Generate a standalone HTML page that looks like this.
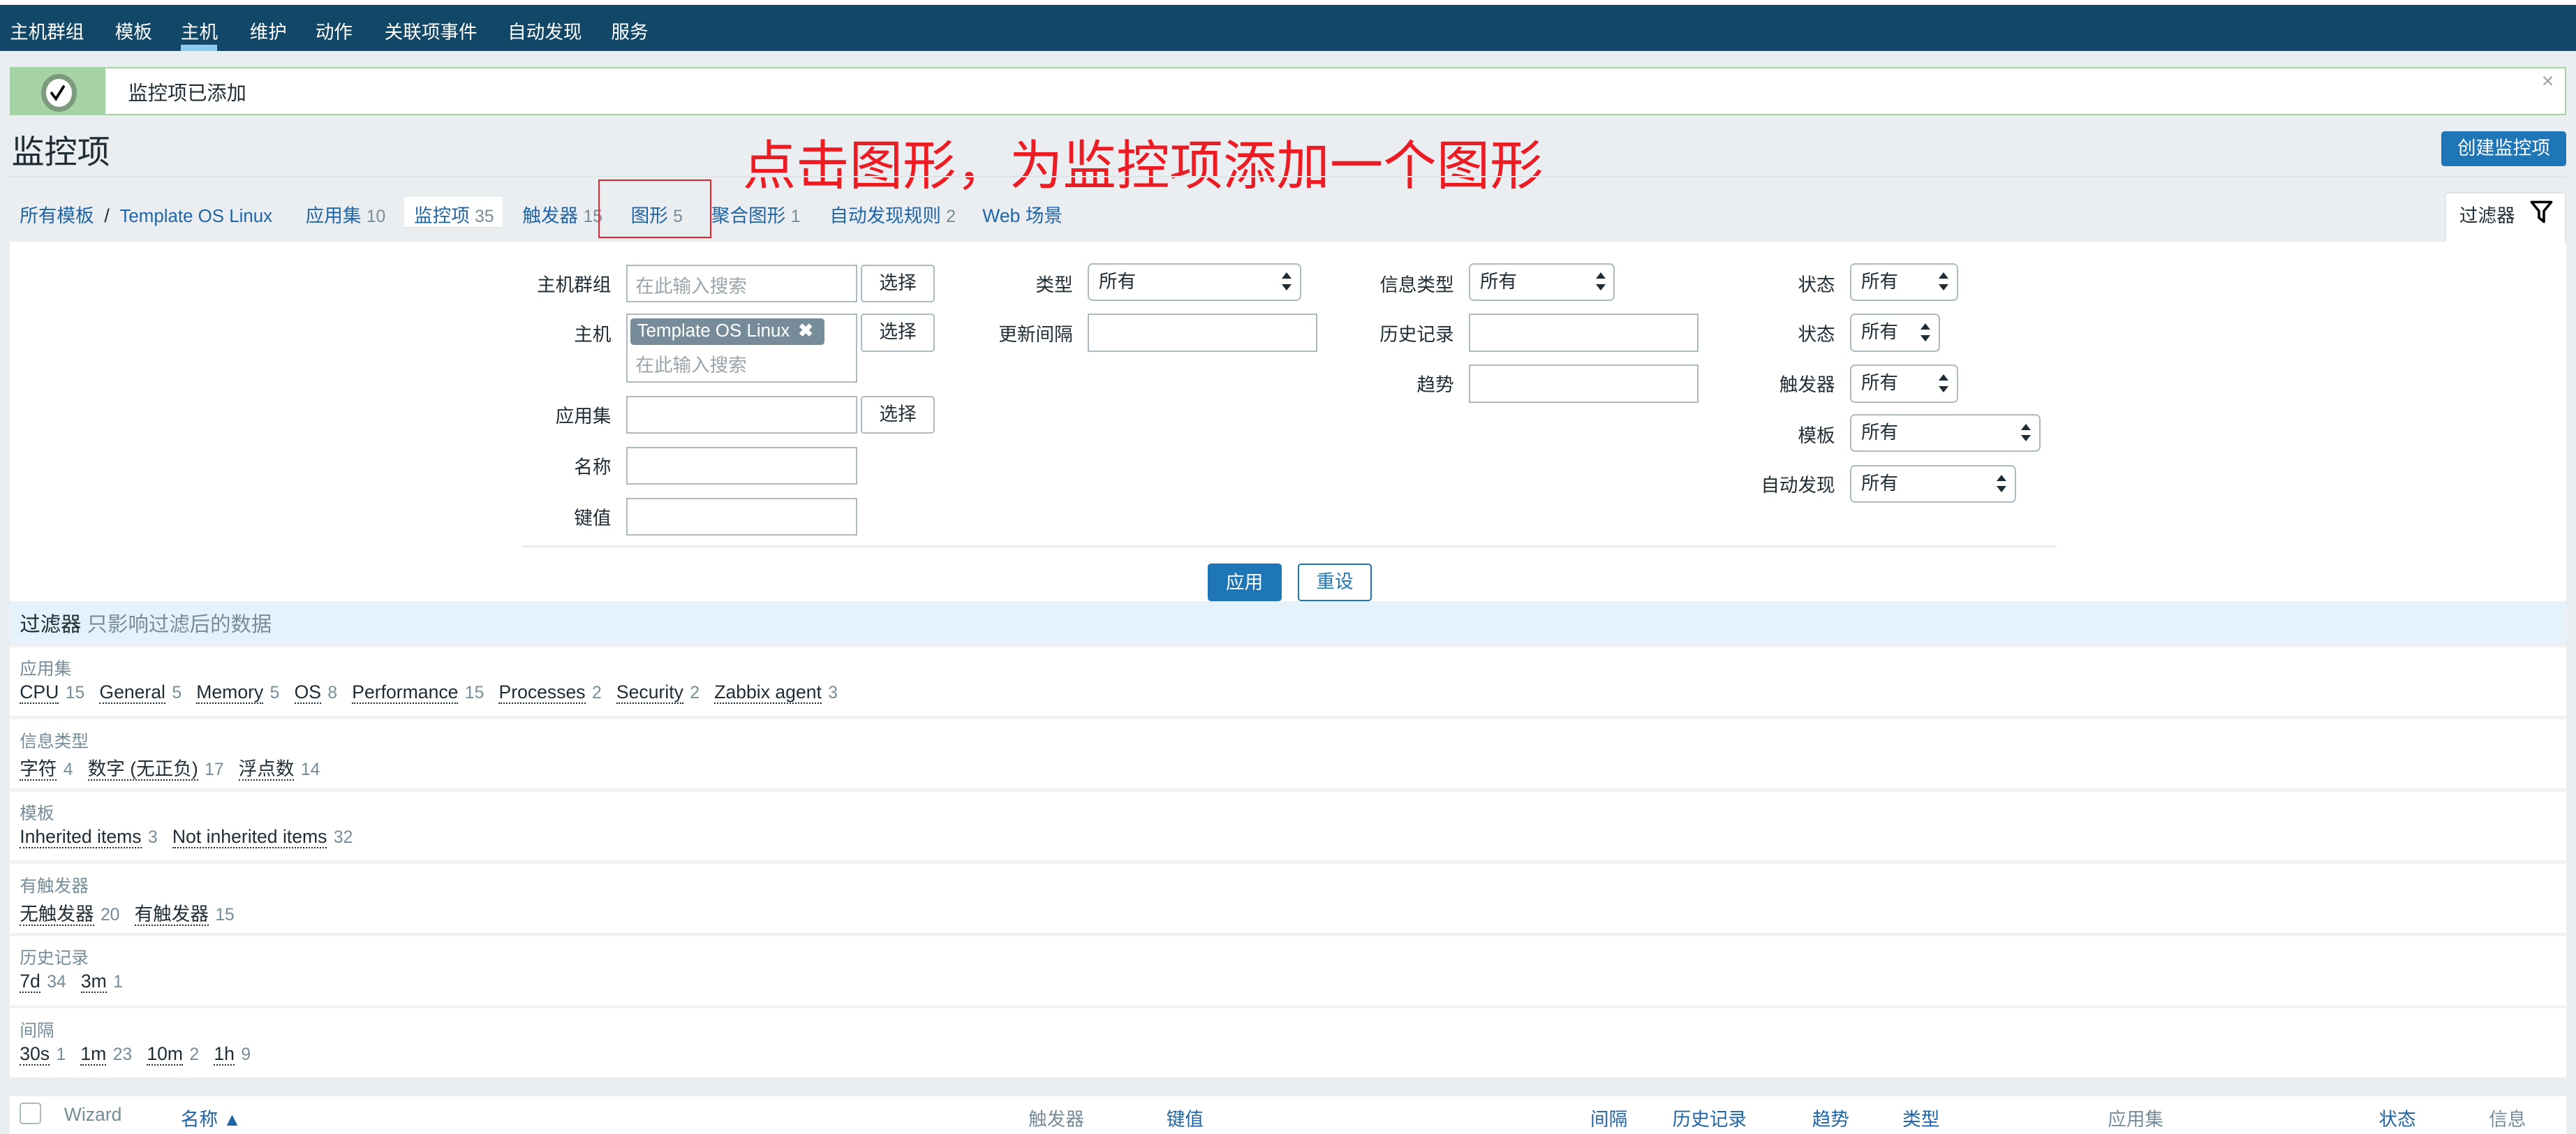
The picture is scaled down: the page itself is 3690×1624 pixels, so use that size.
<!DOCTYPE html>
<html><head><meta charset="utf-8"><style>
html,body{margin:0;padding:0}
body{width:3690px;height:1624px;overflow:hidden;background:#ebeef0}
#r{zoom:2.35332;position:relative;width:1568px;height:690px;font-family:"Liberation Sans","Noto Sans CJK SC",sans-serif;font-size:11.3px;color:#1f2c33}
.a{position:absolute;white-space:nowrap}
.nav{left:0;top:3px;width:1568px;height:28px;background:#124767}
.nav span{position:absolute;top:7px;color:#fff;font-size:11.3px}
.lnk{color:#1f65a6}
.g{color:#768d99}
.inp{position:absolute;background:#fff;border:1px solid #acbbc2;box-sizing:border-box;height:23px}
.ph{color:#9ba5aa;position:absolute;left:5px;top:3px}
.btn{position:absolute;background:#fff;border:1px solid #acbbc2;border-radius:2px;box-sizing:border-box;height:23px;text-align:center;line-height:21px;width:45px}
.sel{position:absolute;background:#fff;border:1px solid #acbbc2;border-radius:3px;box-sizing:border-box;height:23px;padding-left:6px;line-height:21px}
.sel:after{content:"";position:absolute;right:5px;top:5px;width:0;height:0;border:3px solid transparent;border-bottom:4px solid #1f2c33;border-top:none}
.sel:before{content:"";position:absolute;right:5px;top:12px;width:0;height:0;border:3px solid transparent;border-top:4px solid #1f2c33;border-bottom:none}
.lbl{position:absolute;text-align:right}
.sf{position:absolute;left:6px;width:1556px;background:#fff;border-top:2px solid #f0f2f4;height:42px}
.sf .h{position:absolute;left:6px;top:5px;font-size:10.5px;color:#768d99}
.sf .v{position:absolute;left:6px;top:21px}
.sf .v u{text-decoration:none;border-bottom:1px dotted #1f2c33}
.sf .v i{font-style:normal;color:#768d99;font-size:10.5px;margin-left:4px;margin-right:9px}
</style></head><body><div id="r">
<div class="a" style="left:0;top:0;width:1568px;height:3px;background:#fff"></div>
<div class="a nav">
<span style="left:6px">主机群组</span><span style="left:70px">模板</span><span style="left:110px">主机</span>
<span style="left:152px">维护</span><span style="left:192px">动作</span><span style="left:234px">关联项事件</span>
<span style="left:309px">自动发现</span><span style="left:372px">服务</span>
<div style="position:absolute;left:110px;top:24px;width:22px;height:4px;background:#8fcaf3"></div>
</div>
<!-- message -->
<div class="a" style="left:6px;top:41px;width:1556px;height:29px;background:#fff;border:1px solid #a6d3a6;border-left:none;box-sizing:border-box"></div>
<div class="a" style="left:6px;top:41px;width:58px;height:29px;background:#a6d3a6"></div>
<div class="a" style="left:25px;top:45px;width:16px;height:17px;border-radius:50%;background:#fff;border:3px solid #7c9a7c"></div>
<svg class="a" style="left:28px;top:50px" width="14" height="12" viewBox="0 0 14 12"><path d="M3 6 L6 10 L11 2" stroke="#000" stroke-width="1.6" fill="none"/></svg>
<div class="a" style="left:78px;top:47px;font-size:12px">监控项已添加</div>
<div class="a" style="left:1547px;top:42px;color:#9ba5aa;font-size:13px">×</div>
<!-- title -->
<div class="a" style="left:7px;top:76px;font-size:20px">监控项</div>
<div class="a" style="left:452px;top:75px;font-size:32.5px;color:#ec1c24">点击图形，为监控项添加一个图形</div>
<div class="a" style="left:1486px;top:80px;width:76px;height:21px;background:#1f76b7;border-radius:2px;color:#fff;text-align:center;line-height:21px">创建监控项</div>
<div class="a" style="left:6px;top:107px;width:1556px;height:1px;background:#dfe4e7"></div>
<!-- tabs -->
<div class="a" style="left:246px;top:120px;width:60px;height:18px;background:#fff;border-bottom:1px solid #dfe4e7"></div>
<div class="a" style="top:122px;left:12px"><span class="lnk">所有模板</span> &nbsp;/&nbsp; <span class="lnk" style="font-size:11px">Template OS Linux</span></div>
<div class="a lnk" style="top:122px;left:186px">应用集 <span class="g" style="font-size:10.5px">10</span></div>
<div class="a lnk" style="top:122px;left:252px">监控项 <span class="g" style="font-size:10.5px">35</span></div>
<div class="a lnk" style="top:122px;left:318px">触发器 <span class="g" style="font-size:10.5px">15</span></div>
<div class="a lnk" style="top:122px;left:384px">图形 <span class="g" style="font-size:10.5px">5</span></div>
<div class="a lnk" style="top:122px;left:433px">聚合图形 <span class="g" style="font-size:10.5px">1</span></div>
<div class="a lnk" style="top:122px;left:505px">自动发现规则 <span class="g" style="font-size:10.5px">2</span></div>
<div class="a lnk" style="top:122px;left:598px">Web 场景</div>
<div class="a" style="left:364px;top:109px;width:69px;height:36px;border:1px solid #e8212a;box-sizing:border-box"></div>
<div class="a" style="left:1488px;top:117px;width:74px;height:32px;background:#fff;border:1px solid #dfe4e7;border-bottom:none;border-radius:2px 2px 0 0;box-sizing:border-box"></div>
<div class="a" style="left:1497px;top:122px">过滤器</div>
<svg class="a" style="left:1540px;top:122px" width="14" height="14" viewBox="0 0 14 14"><path d="M1 1 H13 L8.5 6.5 V13 L5.5 10.5 V6.5 Z" stroke="#000" stroke-width="1.5" fill="none" stroke-linejoin="round"/></svg>
<!-- filter panel -->
<div class="a" style="left:6px;top:147px;width:1556px;height:219px;background:#fff"></div>
<div class="lbl" style="left:300px;width:72px;top:164px">主机群组</div>
<div class="inp" style="left:381px;top:161px;width:141px"><span class="ph">在此输入搜索</span></div>
<div class="btn" style="left:524px;top:161px">选择</div>
<div class="lbl" style="left:300px;width:72px;top:194px">主机</div>
<div class="inp" style="left:381px;top:191px;width:141px;height:42px"><div style="position:absolute;left:2px;top:2px;width:118px;height:16px;background:#768d99;border-radius:2px;color:#fff;padding-left:4px;line-height:16px;box-sizing:border-box;font-size:11px">Template OS Linux <b style="margin-left:2px">✖</b></div><span class="ph" style="top:21px">在此输入搜索</span></div>
<div class="btn" style="left:524px;top:191px">选择</div>
<div class="lbl" style="left:300px;width:72px;top:244px">应用集</div>
<div class="inp" style="left:381px;top:241px;width:141px"></div>
<div class="btn" style="left:524px;top:241px">选择</div>
<div class="lbl" style="left:300px;width:72px;top:275px">名称</div>
<div class="inp" style="left:381px;top:272px;width:141px"></div>
<div class="lbl" style="left:300px;width:72px;top:306px">键值</div>
<div class="inp" style="left:381px;top:303px;width:141px"></div>

<div class="lbl" style="left:580px;width:73px;top:164px">类型</div>
<div class="sel" style="left:662px;top:160px;width:130px">所有</div>
<div class="lbl" style="left:580px;width:73px;top:194px">更新间隔</div>
<div class="inp" style="left:662px;top:191px;width:140px"></div>

<div class="lbl" style="left:800px;width:85px;top:164px">信息类型</div>
<div class="sel" style="left:894px;top:160px;width:89px">所有</div>
<div class="lbl" style="left:800px;width:85px;top:194px">历史记录</div>
<div class="inp" style="left:894px;top:191px;width:140px"></div>
<div class="lbl" style="left:800px;width:85px;top:225px">趋势</div>
<div class="inp" style="left:894px;top:222px;width:140px"></div>

<div class="lbl" style="left:1040px;width:77px;top:164px">状态</div>
<div class="sel" style="left:1126px;top:160px;width:66px">所有</div>
<div class="lbl" style="left:1040px;width:77px;top:194px">状态</div>
<div class="sel" style="left:1126px;top:191px;width:55px">所有</div>
<div class="lbl" style="left:1040px;width:77px;top:225px">触发器</div>
<div class="sel" style="left:1126px;top:222px;width:66px">所有</div>
<div class="lbl" style="left:1040px;width:77px;top:256px">模板</div>
<div class="sel" style="left:1126px;top:252px;width:116px">所有</div>
<div class="lbl" style="left:1040px;width:77px;top:286px">自动发现</div>
<div class="sel" style="left:1126px;top:283px;width:101px">所有</div>

<div class="a" style="left:318px;top:332px;width:934px;height:1px;background:#ebeef0"></div>
<div class="a" style="left:735px;top:343px;width:45px;height:23px;background:#1f76b7;border-radius:2px;color:#fff;text-align:center;line-height:23px">应用</div>
<div class="a" style="left:790px;top:343px;width:45px;height:23px;border:1px solid #1f76b7;border-radius:2px;color:#1f76b7;text-align:center;line-height:21px;box-sizing:border-box;background:#fff">重设</div>

<div class="a" style="left:6px;top:366px;width:1556px;height:26px;background:#e5f2fc"></div>
<div class="a" style="left:12px;top:370px;font-size:12.5px">过滤器 <span class="g">只影响过滤后的数据</span></div>

<div class="sf" style="top:392px;height:42px"><span class="h">应用集</span><span class="v"><u>CPU</u><i>15</i><u>General</u><i>5</i><u>Memory</u><i>5</i><u>OS</u><i>8</i><u>Performance</u><i>15</i><u>Processes</u><i>2</i><u>Security</u><i>2</i><u>Zabbix agent</u><i>3</i></span></div>
<div class="sf" style="top:436px"><span class="h">信息类型</span><span class="v"><u>字符</u><i>4</i><u>数字 (无正负)</u><i>17</i><u>浮点数</u><i>14</i></span></div>
<div class="sf" style="top:480px"><span class="h">模板</span><span class="v"><u>Inherited items</u><i>3</i><u>Not inherited items</u><i>32</i></span></div>
<div class="sf" style="top:524px"><span class="h">有触发器</span><span class="v"><u>无触发器</u><i>20</i><u>有触发器</u><i>15</i></span></div>
<div class="sf" style="top:568px"><span class="h">历史记录</span><span class="v"><u>7d</u><i>34</i><u>3m</u><i>1</i></span></div>
<div class="sf" style="top:612px"><span class="h">间隔</span><span class="v"><u>30s</u><i>1</i><u>1m</u><i>23</i><u>10m</u><i>2</i><u>1h</u><i>9</i></span></div>

<div class="a" style="left:6px;top:667px;width:1556px;height:23px;background:#fff"></div>
<div class="a" style="left:12px;top:671px;width:13px;height:13px;border:1px solid #acbbc2;border-radius:2px;box-sizing:border-box"></div>
<div class="a g" style="left:39px;top:672px">Wizard</div>
<div class="a lnk" style="left:110px;top:672px">名称 ▲</div>
<div class="a g" style="left:626px;top:672px">触发器</div>
<div class="a lnk" style="left:710px;top:672px">键值</div>
<div class="a lnk" style="left:968px;top:672px">间隔</div>
<div class="a lnk" style="left:1018px;top:672px">历史记录</div>
<div class="a lnk" style="left:1103px;top:672px">趋势</div>
<div class="a lnk" style="left:1158px;top:672px">类型</div>
<div class="a g" style="left:1283px;top:672px">应用集</div>
<div class="a lnk" style="left:1448px;top:672px">状态</div>
<div class="a g" style="left:1515px;top:672px">信息</div>
</div></body></html>
